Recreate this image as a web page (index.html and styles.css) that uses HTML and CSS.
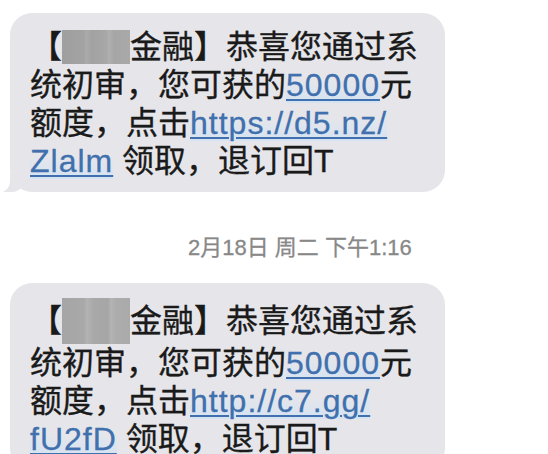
FILE: index.html
```html
<!DOCTYPE html>
<html lang="zh-CN">
<head>
<meta charset="utf-8">
<title>短信</title>
<link rel="stylesheet" href="styles.css">
</head>
<body>
<div class="thread">
  <div class="bubble bubble--tail">
    <p class="msg">【<span class="redact"></span>金融】恭喜您通过系<br>统初审，您可获的<span class="link">50000</span>元<br>额度，点击<span class="link">https://d5.nz/</span><br><span class="link">Zlalm</span> 领取，退订回T</p>
  </div>
  <div class="stamp">2月18日 周二 下午1:16</div>
  <div class="bubble">
    <p class="msg">【<span class="redact redact--tall"></span>金融】恭喜您通过系<br>统初审，您可获的<span class="link">50000</span>元<br>额度，点击<span class="link">http://c7.gg/</span><br><span class="link">fU2fD</span> 领取，退订回T</p>
  </div>
</div>
</body>
</html>
```
FILE: styles.css
```css
html, body {
  margin: 0;
  padding: 0;
  background: #ffffff;
  overflow: hidden;
}

.thread {
  width: 548px;
  height: 454px;
  padding: 13px 0 0 10px;
  box-sizing: border-box;
  font-family: "Liberation Sans", "Noto Sans CJK SC", sans-serif;
}

.bubble {
  position: relative;
  width: 435px;
  box-sizing: border-box;
  padding: 15px 10px 12px 20px;
  background: #e6e6ea;
  border-radius: 22px;
}

.bubble--tail::before {
  content: "";
  position: absolute;
  left: -8px;
  bottom: 0;
  width: 24px;
  height: 18px;
  background: #e6e6ea;
  border-bottom-right-radius: 14px 16px;
}

.bubble--tail::after {
  content: "";
  position: absolute;
  left: -14px;
  bottom: -1px;
  width: 14px;
  height: 20px;
  background: #ffffff;
  border-bottom-right-radius: 12px 12px;
}

.msg {
  position: relative;
  z-index: 1;
  margin: 0;
  font-size: 32px;
  line-height: 38px;
  color: #1a1a1a;
  white-space: nowrap;
  -webkit-text-stroke: 0.35px #1a1a1a;
}

.link {
  color: #4070ad;
  -webkit-text-stroke: 0.3px #4070ad;
  text-decoration: underline;
  text-decoration-thickness: 2px;
  text-underline-offset: 3px;
  letter-spacing: 1px;
  background: linear-gradient(to bottom, rgba(214, 230, 246, 0) 35%, rgba(208, 226, 245, 0.8) 100%);
}

.redact {
  display: inline-block;
  width: 68px;
  height: 34px;
  vertical-align: -6px;
  background: linear-gradient(to right,
    #9f9f9f 0, #a3a3a3 22px, #ababab 24px, #a2a2a2 30px,
    #a7a7a7 44px, #b0b0b0 47px, #a6a6a6 52px, #a9a9a9 68px);
}

.redact--tall {
  height: 46px;
  vertical-align: -12px;
  background: linear-gradient(to right,
    #a5a5a5 0, #a9a9a9 22px, #b3b3b3 25px, #a8a8a8 32px,
    #a6a6a6 46px, #b4b4b4 49px, #acacac 54px, #aaaaaa 68px);
}

.stamp {
  margin: 43px 0 22px 178px;
  font-size: 22px;
  line-height: 26px;
  color: #888888;
  -webkit-text-stroke: 0.3px #888888;
}
```
